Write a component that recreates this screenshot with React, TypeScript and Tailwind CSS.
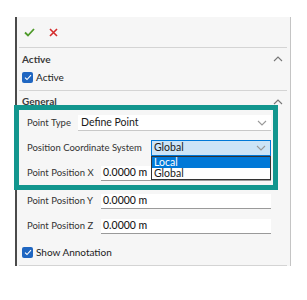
import React from 'react';

const Chevron = ({ up = false, className = '' }: { up?: boolean; className?: string }) => (
  <svg width="10" height="6" viewBox="0 0 10 6" className={className}>
    <path d={up ? 'M1 5 L5 1 L9 5' : 'M1 1 L5 5 L9 1'} fill="none" stroke="currentColor" strokeWidth="1.1" />
  </svg>
);

const CheckBox = () => (
  <span className="flex h-[11px] w-[11px] shrink-0 items-center justify-center rounded-[2px] bg-[#1f66c1]">
    <svg width="8" height="7" viewBox="0 0 8 7">
      <path d="M1 3.6 L3 5.5 L7 1.2" fill="none" stroke="white" strokeWidth="1.1" />
    </svg>
  </span>
);

const ValueInput = ({ value }: { value: string }) => (
  <div className="flex h-[15px] flex-1 items-center border-b border-[#9a9a9a] bg-white pl-[2px] text-[10.5px] font-medium text-[#1a1a1a]">
    {value}
  </div>
);

export default function App() {
  return (
    <div className="h-[300px] w-[307px] whitespace-nowrap bg-white pt-[17px] pl-[15px] font-['Lato','Open_Sans',sans-serif] text-[9.5px] text-[#333]">
      <div className="relative h-[249px] w-[276px] border-l-2 border-r border-l-[#4a4a4a] border-r-[#c4c4c4] bg-[#f6f6f6]">
        {/* toolbar */}
        <div className="flex h-[30px] items-center gap-[14px] pl-[7px]">
          <svg width="11" height="9" viewBox="0 0 11 9">
            <path d="M1 4.5 L4 7.5 L10 1" fill="none" stroke="#4e9a2a" strokeWidth="1.8" />
          </svg>
          <svg width="9" height="9" viewBox="0 0 9 9">
            <path d="M1 1 L8 8 M8 1 L1 8" fill="none" stroke="#d42b2b" strokeWidth="1.6" />
          </svg>
        </div>
        <div className="mx-[2px] w-[268px] border-t border-[#d4d4d4]" />

        {/* Active */}
        <div className="flex h-[22px] items-center justify-between pl-[5px] pr-[7px]">
          <span className="text-[10px] font-bold text-[#3a3a3a]">Active</span>
          <Chevron up className="text-[#777]" />
        </div>
        <div className="mb-[6px] flex h-[14px] items-center gap-[3px] pl-[5px]">
          <CheckBox />
          <span className="text-[10px] text-[#222]">Active</span>
        </div>
        <div className="mx-[2px] w-[268px] border-t border-[#d4d4d4]" />

        {/* General */}
        <div className="flex h-[21px] items-center justify-between pl-[5px] pr-[7px]">
          <span className="text-[10px] font-bold text-[#3a3a3a]">General</span>
          <Chevron up className="text-[#777]" />
        </div>
        <div className="flex flex-col pl-[10px] pr-[19px] pt-[3px]">
          <div className="flex h-[16px] items-center">
            <span className="w-[51px] shrink-0">Point Type</span>
            <div className="flex h-[16px] flex-1 items-center justify-between border-b border-[#c8c8c8] bg-white pl-[3px] pr-[4px] text-[10.5px] text-[#1a1a1a]">
              Define Point
              <Chevron className="text-[#999]" />
            </div>
          </div>
          <div className="mt-[9px] flex h-[16px] items-center">
            <span className="w-[124px] shrink-0">Position Coordinate System</span>
            <div className="relative flex h-[16px] flex-1 items-center justify-between border border-[#0078d7] bg-[#cce4f7] pl-[2px] pr-[4px] text-[10.5px] text-[#1a1a1a]">
              Global
              <Chevron className="text-[#999]" />
              <div className="absolute left-[-1px] right-[-1px] top-[15px] z-10 flex flex-col border border-[#333] bg-white text-[10.5px] leading-[11px]">
                <span className="h-[11px] bg-[#0078d7] pl-[2px] text-white">Local</span>
                <span className="h-[11px] pl-[2px] text-[#1a1a1a]">Global</span>
              </div>
            </div>
          </div>
          <div className="mt-[9px] flex h-[16px] items-center">
            <span className="w-[74px] shrink-0">Point Position X</span>
            <ValueInput value="0.0000 m" />
          </div>
          <div className="mt-[12px] flex h-[16px] items-center">
            <span className="w-[74px] shrink-0">Point Position Y</span>
            <ValueInput value="0.0000 m" />
          </div>
          <div className="mt-[9px] flex h-[16px] items-center">
            <span className="w-[74px] shrink-0">Point Position Z</span>
            <ValueInput value="0.0000 m" />
          </div>
        </div>
        <div className="mt-[11px] flex h-[14px] items-center gap-[3px] pl-[5px]">
          <CheckBox />
          <span className="text-[10px] text-[#222]">Show Annotation</span>
        </div>
        <div className="mx-[2px] mt-[6px] w-[268px] border-t border-[#d4d4d4]" />

        {/* highlight frame */}
        <div className="pointer-events-none absolute left-[-3px] top-[88px] z-20 h-[85px] w-[264px] border-[5px] border-[#12968e]" />
      </div>
    </div>
  );
}
